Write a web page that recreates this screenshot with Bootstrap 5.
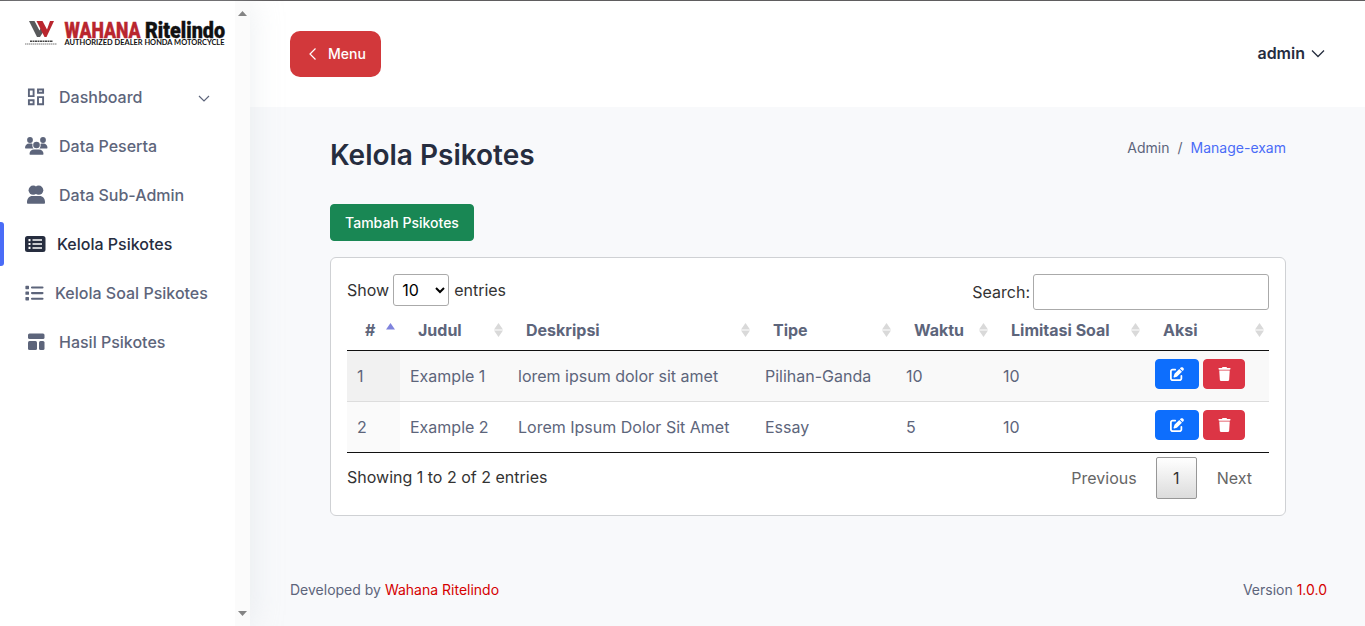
<!DOCTYPE html>
<html lang="id">
<head>
<meta charset="utf-8">
<meta name="viewport" content="width=device-width, initial-scale=1">
<title>Kelola Psikotes</title>
<link href="https://cdn.jsdelivr.net/npm/bootstrap@5.3.0/dist/css/bootstrap.min.css" rel="stylesheet">
<style>
body{font-family:Inter,"Liberation Sans",sans-serif;color:#333;background:#f8f9fb;font-size:16px;line-height:1.5;overflow:hidden}
.app-shell{height:100vh;border-top:1px solid #5f5d5f}
.side-panel{width:250px;flex:none;background:#fff;box-shadow:0 0 30px rgba(200,208,216,.35);z-index:2}
.side-body{width:235px}
.side-track{width:15px;background:#fbfbfb;padding:10px 0 10px 3px}
.side-logo{margin:16px 0 0 24px;height:32px;overflow:visible}
.side-menu{margin-top:26px}
.side-menu .nav-link{height:44px;margin-bottom:5px;padding:0 0 0 24px;color:#5d657b;font-weight:500;line-height:24px;position:relative}
.side-menu .nav-link.active{color:#262d3f}
.side-menu .nav-link.active::before{content:"";position:absolute;left:0;top:0;width:4px;height:44px;background:#4a6cf7;border-radius:0 3px 3px 0}
.side-menu .caret-ico{margin-right:25px}
.ico{flex:none;fill:currentColor}
.top-bar{height:106px;background:#fff;padding:0 41px 0 40px}
.btn-menu{--bs-btn-bg:#d2383b;--bs-btn-color:#fff;--bs-btn-hover-bg:#bd2e31;--bs-btn-hover-color:#fff;width:91px;height:46px;border-radius:10px;font-size:14px;font-weight:500;padding:0 0 1px 4px}
.btn-menu svg{margin-right:11px}
.profile-name{color:#262d3f;font-weight:600;padding-bottom:2px}
.profile-name svg{margin-left:6px}
.content-area{padding:0 80px}
.title-row{padding-top:30px}
.title-row h2{font-size:28px;font-weight:600;color:#262d3f;line-height:36px}
.crumb{font-size:14px;line-height:22px;color:#5d657b;--bs-breadcrumb-divider-color:#5d657b}
.crumb .breadcrumb-item.active{color:#4a6cf7}
.btn-add{width:144px;height:37px;font-size:14px;font-weight:500;padding:0;margin-top:31px;border-radius:4px}
.data-card{margin-top:16px;height:259px;padding:16px;border-color:#cfd1d4;border-radius:6px}
.len-label{height:32px}
.len-select{width:56px;height:32px;border:1px solid #aaa;border-radius:3px;padding:4px;background:transparent;color:#000;margin:0 5px 0 4px}
.find-input{width:236px;height:36px;border:1px solid #aaa;border-radius:3px;background:#fff;margin-left:3px}
.exam-table{table-layout:fixed;width:922px;margin:0;border-collapse:separate;border-spacing:0;color:#5d657b;border-bottom:1px solid #111}
.exam-table th,.exam-table td{text-align:left;vertical-align:middle}
.exam-table thead th{height:41px;padding:0 5px 0 18px;border-bottom:1px solid #111;font-weight:700}
.exam-table tbody tr td{padding:0 10px;height:51px}
.exam-table tbody tr:first-child td{background:#f9f9f9;border-bottom:1px solid #ddd}
.exam-table tbody tr:first-child td:first-child{background:#f1f1f1}
.exam-table tbody tr:last-child td{height:50px}
.exam-table tbody tr:last-child td:first-child{background:#fafafa}
.btn-act{height:30px;padding:0;border-radius:4px;display:inline-flex;align-items:center;justify-content:center}
.btn-act.edit{width:44px}.btn-act.del{width:42px}
.info-text{padding-top:8px}
.pager-text{color:#666;padding-right:17px}
.pager-now{width:41px;height:42px;border:1px solid #979797;border-radius:2px;background:linear-gradient(#fff,#dcdcdc);color:#333;margin:0 20px 0 19px}
.foot-bar{padding:0 39px 2px 40px;font-size:14px;color:#5d657b;height:71px}
.foot-bar a{color:#d50100;text-decoration:none}
</style>
</head>
<body>
<svg width="0" height="0" class="position-absolute">
<defs>
<symbol id="pen" viewBox="0 0 512 512"><path d="M471.6 21.7c-21.9-21.9-57.3-21.9-79.2 0L362.3 51.7l97.9 97.9 30.1-30.1c21.9-21.9 21.9-57.3 0-79.2L471.6 21.7zm-299.2 220c-6.1 6.1-10.8 13.6-13.5 21.9l-29.6 88.8c-2.9 8.6-.6 18.1 5.8 24.6s15.9 8.7 24.6 5.8l88.8-29.6c8.2-2.7 15.7-7.4 21.9-13.5L437.7 172.3 339.7 74.3 172.4 241.7zM96 64C43 64 0 107 0 160V416c0 53 43 96 96 96H352c53 0 96-43 96-96V320c0-17.7-14.3-32-32-32s-32 14.3-32 32v96c0 17.7-14.3 32-32 32H96c-17.7 0-32-14.3-32-32V160c0-17.7 14.3-32 32-32h96c17.7 0 32-14.3 32-32s-14.3-32-32-32H96z"/></symbol>
<symbol id="bin" viewBox="0 0 448 512"><path d="M135.2 17.7L128 32H32C14.3 32 0 46.3 0 64S14.3 96 32 96H416c17.7 0 32-14.3 32-32s-14.3-32-32-32H320l-7.2-14.3C307.4 6.8 296.3 0 284.2 0H163.8c-12.1 0-23.2 6.8-28.6 17.7zM416 128H32L53.2 467c1.6 25.3 22.6 45 47.9 45H346.9c25.3 0 46.3-19.7 47.9-45L416 128z"/></symbol>
<symbol id="sort" viewBox="0 0 9 14"><path fill="#d9d9d9" d="M4.500 0L9 6.500H0zM0 7.500h9L4.500 14z"/></symbol>
</defs>
</svg>
<div class="app-shell d-flex">
<aside class="side-panel d-flex">
<div class="side-body">
<svg class="side-logo d-block" width="204" height="32" viewBox="0 0 204 32">
<path fill="#58595b" d="M5 4h5.500l5 9.500 1.500-3 2.500 4-3.500 5.500h-3z"/>
<path fill="#b9262e" d="M12.500 4h6l4.500 8.500L26 4h4l-7.500 16h-2z"/>
<path stroke="#444" stroke-width="1.400" stroke-dasharray="2 .5" d="M6 24.200h23"/><path stroke="#777" stroke-width="1" stroke-dasharray="1.500 .5" d="M1 27h32"/>
<text x="40.500" y="20.700" textLength="76" lengthAdjust="spacingAndGlyphs" font-family="Roboto" font-weight="900" font-size="22" fill="#b9262e" stroke="#b9262e" stroke-width=".4">WAHANA</text>
<text x="121" y="20.700" textLength="80" lengthAdjust="spacingAndGlyphs" font-family="Roboto" font-weight="900" font-size="22" fill="#111" stroke="#111" stroke-width=".4">Ritelindo</text>
<text x="40.500" y="28" textLength="160" lengthAdjust="spacingAndGlyphs" font-family="Lato" font-weight="700" font-size="6.500" fill="#111">AUTHORIZED DEALER HONDA MOTORCYCLE</text>
</svg>
<nav class="side-menu nav flex-column flex-nowrap">
<a class="nav-link d-flex align-items-center" href="#"><svg class="ico me-2" width="27" height="22" viewBox="0 0 27 22"><path fill="none" stroke="currentColor" stroke-width="1.900" d="M4.900 3.500h4.700v6.600h-4.700zM4.900 14.300h4.700v4h-4.700zM14 3.500h5.100v3.300h-5.100zM14 11.100h5.100v7.200h-5.100z"/></svg>Dashboard<svg class="ico ms-auto caret-ico" width="12" height="22" viewBox="0 0 12 22"><path fill="none" stroke="currentColor" stroke-width="1.200" d="M1 10l5 5 5-5"/></svg></a>
<a class="nav-link d-flex align-items-center" href="#"><svg class="ico me-2" width="27" height="22" viewBox="0 0 27 22"><circle cx="6" cy="5" r="2.900"/><circle cx="19" cy="5" r="2.900"/><path d="M1 13c0-3 2-4.500 4-4.500h2.500c.3 0 .8.300 1 .5-.5 2 .3 3.700 1 4.500H1.500zM23.500 13c0-3-2-4.500-4-4.500H17.500c-.3 0-.8.300-1 .5.500 2-.3 3.700-1 4.500H23z"/><circle cx="12.500" cy="10" r="3.300"/><path d="M5.500 19c0-3 2-4.500 4.500-4.500h5c2.500 0 4.500 1.500 4.500 4.500 0 .4-.3.700-.7.700H6.200c-.4 0-.7-.3-.7-.7z"/></svg>Data Peserta</a>
<a class="nav-link d-flex align-items-center" href="#"><svg class="ico me-2" width="27" height="22" viewBox="0 0 27 22"><circle cx="9.200" cy="6.200" r="4.600"/><circle cx="14.700" cy="6.200" r="4.600"/><path d="M3 18.500C3 14.500 5 12 8.500 12h7c3.500 0 5.500 2.500 5.500 6.500 0 .8-.4 1.300-1 1.300H4c-.6 0-1-.5-1-1.300z"/></svg>Data Sub-Admin</a>
<a class="nav-link active d-flex align-items-center" href="#"><svg class="ico" style="margin-right:7px" width="26" height="22" viewBox="0 0 26 22"><path fill-rule="evenodd" d="M3.500 3h15.500a2.500 2.500 0 0 1 2.500 2.500v11a2.500 2.500 0 0 1-2.500 2.500h-15.500a2.500 2.500 0 0 1-2.500-2.500v-11a2.500 2.500 0 0 1 2.500-2.500zM4.500 6v2.200h2V6zM8.500 6.200v1.600h9.500V6.200zM4.500 9.900v2.200h2V9.900zM8.500 10.200v1.600h9.500v-1.600zM4.500 13.800V16h2v-2.200zM8.500 14.200v1.600h9.500v-1.600z"/></svg>Kelola Psikotes</a>
<a class="nav-link d-flex align-items-center" href="#"><svg class="ico me-2" width="23" height="22" viewBox="0 0 23 22"><path d="M2 3.800h2.400q.6 0 .6.600v2.200q0 .6-.6.600H2q-.6 0-.6-.6V4.400q0-.6.6-.6zM2 9.400h2.400q.6 0 .6.600v2.200q0 .6-.6.600H2q-.6 0-.6-.6V10q0-.6.6-.6zM2 15h2.400q.6 0 .6.600v2.200q0 .6-.6.600H2q-.6 0-.6-.6v-2.200q0-.6.600-.6z"/><path stroke="currentColor" stroke-width="2.100" stroke-linecap="round" d="M8 5.500h10.500M8 11.100h10.500M8 16.700h10.500"/></svg>Kelola Soal Psikotes</a>
<a class="nav-link d-flex align-items-center" href="#"><svg class="ico me-2" width="27" height="22" viewBox="0 0 27 22"><rect x="4" y="2.500" width="16.500" height="5.500" rx="1.500"/><rect x="4" y="10" width="9" height="9" rx="1.500"/><rect x="15" y="10" width="5.500" height="9" rx="1.500"/></svg>Hasil Psikotes</a>
</nav>
</div>
<div class="side-track d-flex flex-column justify-content-between">
<svg width="9" height="5" viewBox="0 0 9 5"><path fill="#858585" d="M4.500 0L9 5H0z"/></svg>
<svg width="9" height="5" viewBox="0 0 9 5"><path fill="#858585" d="M0 0h9L4.500 5z"/></svg>
</div>
</aside>
<div class="flex-grow-1 d-flex flex-column">
<header class="top-bar d-flex align-items-center justify-content-between">
<button class="btn btn-menu border-0 d-flex align-items-center justify-content-center"><svg width="8" height="14" viewBox="0 0 8 14"><path fill="none" stroke="#fff" stroke-width="1.200" d="M6.500 1.500L1 7l5.500 5.500"/></svg>Menu</button>
<div class="profile-name d-flex align-items-center">admin<svg width="14" height="14" viewBox="0 0 14 14"><path fill="none" stroke="#262d3f" stroke-width="1.300" d="M1 4.500l6 6 6-6"/></svg></div>
</header>
<main class="content-area">
<div class="title-row d-flex justify-content-between">
<h2 class="m-0">Kelola Psikotes</h2>
<ol class="breadcrumb crumb m-0"><li class="breadcrumb-item">Admin</li><li class="breadcrumb-item active">Manage-exam</li></ol>
</div>
<button class="btn btn-success btn-add d-block">Tambah Psikotes</button>
<section class="card data-card">
<div class="d-flex justify-content-between">
<label class="len-label d-flex align-items-center">Show<select class="len-select"><option>10</option></select>entries</label>
<label class="d-flex align-items-center">Search:<input class="find-input" type="search"></label>
</div>
<table class="exam-table">
<colgroup><col style="width:53px"><col style="width:108px"><col style="width:247px"><col style="width:141px"><col style="width:97px"><col style="width:152px"><col style="width:124px"></colgroup>
<thead><tr>
<th><div class="d-flex justify-content-between">#<svg width="9" height="14" viewBox="0 0 9 14" class="mt-1"><path fill="#7f83dd" d="M4.500 1L9 7.500H0z"/></svg></div></th>
<th><div class="d-flex justify-content-between align-items-center">Judul<svg width="9" height="14"><use href="#sort"/></svg></div></th>
<th><div class="d-flex justify-content-between align-items-center">Deskripsi<svg width="9" height="14"><use href="#sort"/></svg></div></th>
<th><div class="d-flex justify-content-between align-items-center">Tipe<svg width="9" height="14"><use href="#sort"/></svg></div></th>
<th><div class="d-flex justify-content-between align-items-center">Waktu<svg width="9" height="14"><use href="#sort"/></svg></div></th>
<th><div class="d-flex justify-content-between align-items-center">Limitasi Soal<svg width="9" height="14"><use href="#sort"/></svg></div></th>
<th><div class="d-flex justify-content-between align-items-center">Aksi<svg width="9" height="14"><use href="#sort"/></svg></div></th>
</tr></thead>
<tbody>
<tr><td>1</td><td>Example 1</td><td>lorem ipsum dolor sit amet</td><td>Pilihan-Ganda</td><td>10</td><td>10</td><td><div class="d-flex gap-1 pb-1"><button class="btn btn-primary btn-act edit"><svg class="ico" width="14" height="14"><use href="#pen"/></svg></button><button class="btn btn-danger btn-act del"><svg class="ico" width="13" height="14"><use href="#bin"/></svg></button></div></td></tr>
<tr><td>2</td><td>Example 2</td><td>Lorem Ipsum Dolor Sit Amet</td><td>Essay</td><td>5</td><td>10</td><td><div class="d-flex gap-1 pb-1"><button class="btn btn-primary btn-act edit"><svg class="ico" width="14" height="14"><use href="#pen"/></svg></button><button class="btn btn-danger btn-act del"><svg class="ico" width="13" height="14"><use href="#bin"/></svg></button></div></td></tr>
</tbody>
</table>
<div class="d-flex justify-content-between pt-1">
<div class="info-text">Showing 1 to 2 of 2 entries</div>
<div class="d-flex align-items-center pager-text"><span>Previous</span><span class="pager-now d-flex align-items-center justify-content-center">1</span><span>Next</span></div>
</div>
</section>
</main>
<footer class="foot-bar d-flex justify-content-between mt-auto align-items-center">
<span>Developed by <a href="#">Wahana Ritelindo</a></span><span>Version <a href="#">1.0.0</a></span>
</footer>
</div>
</div>
<script src="https://cdn.jsdelivr.net/npm/bootstrap@5.3.0/dist/js/bootstrap.bundle.min.js"></script>
</body>
</html>
